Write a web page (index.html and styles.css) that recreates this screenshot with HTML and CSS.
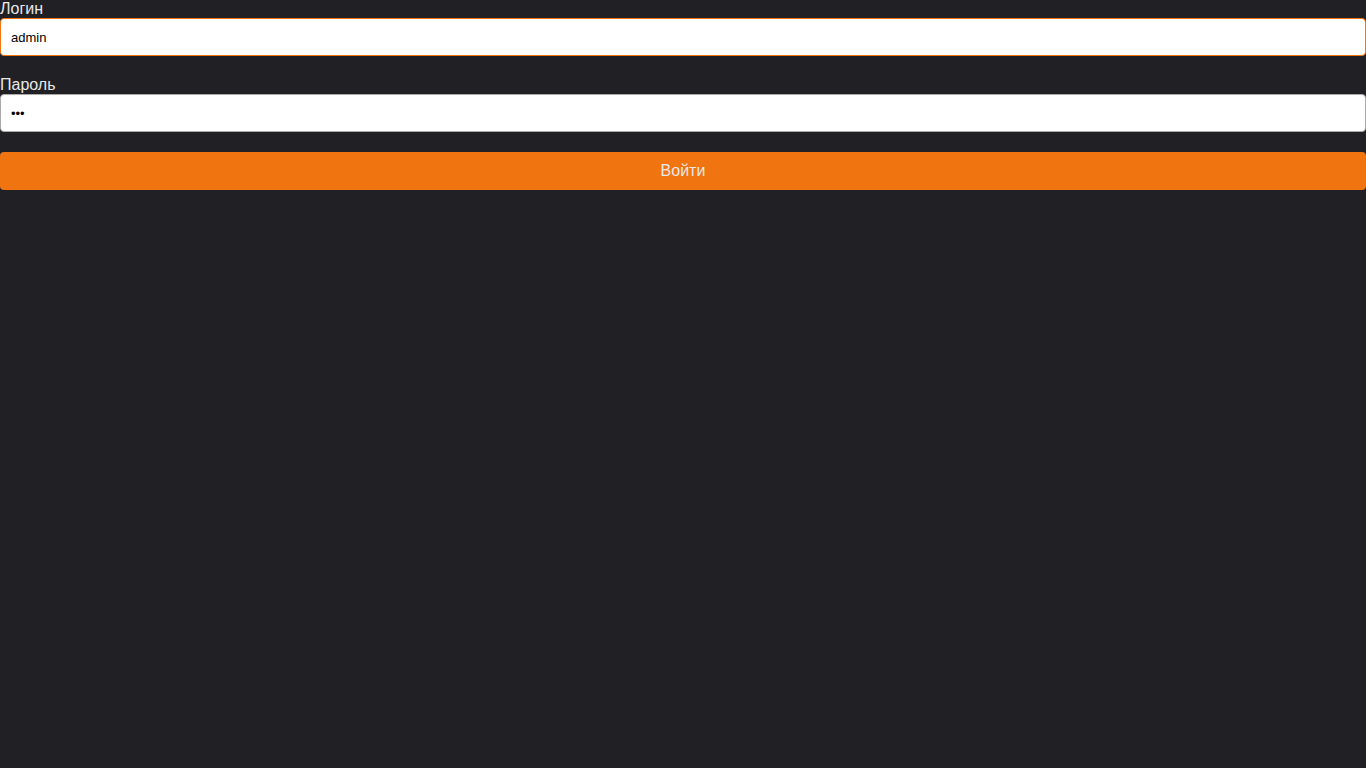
FILE: index.html
```html
<!DOCTYPE html>
<html lang="ru">
<head>
<meta charset="utf-8">
<title>Вход</title>
<link rel="stylesheet" href="styles.css">
</head>
<body>
<form class="login-form">
  <label class="field-label" for="login">Логин</label>
  <input class="field-input field-input--focused" id="login" type="text" value="admin">
  <label class="field-label field-label--spaced" for="password">Пароль</label>
  <input class="field-input" id="password" type="password" value="123">
  <button class="submit-btn" type="button">Войти</button>
</form>
</body>
</html>
```
FILE: styles.css
```css
html, body {
  margin: 0;
  padding: 0;
  background: #202025;
  height: 100%;
}
body {
  font-family: "Liberation Sans", Arial, sans-serif;
  color: #e6e6e6;
}
.login-form {
  display: flex;
  flex-direction: column;
}
.field-label {
  font-size: 16px;
  line-height: 18px;
  color: #e8e8e8;
}
.field-label--spaced {
  margin-top: 20px;
}
.field-input {
  box-sizing: border-box;
  height: 38px;
  width: 100%;
  margin: 0;
  padding: 0 10px;
  border: 1px solid #aaaaaa;
  border-radius: 4px;
  background: #ffffff;
  color: #000;
  font-family: "Liberation Sans", Arial, sans-serif;
  font-size: 13px;
  outline: none;
}
.field-input--focused {
  border-color: #f07410;
}
.submit-btn {
  box-sizing: border-box;
  margin-top: 20px;
  height: 38px;
  width: 100%;
  border: none;
  border-radius: 4px;
  background: #f07410;
  color: #e8e8e8;
  font-family: "Liberation Sans", Arial, sans-serif;
  font-size: 16px;
  cursor: pointer;
}
```
